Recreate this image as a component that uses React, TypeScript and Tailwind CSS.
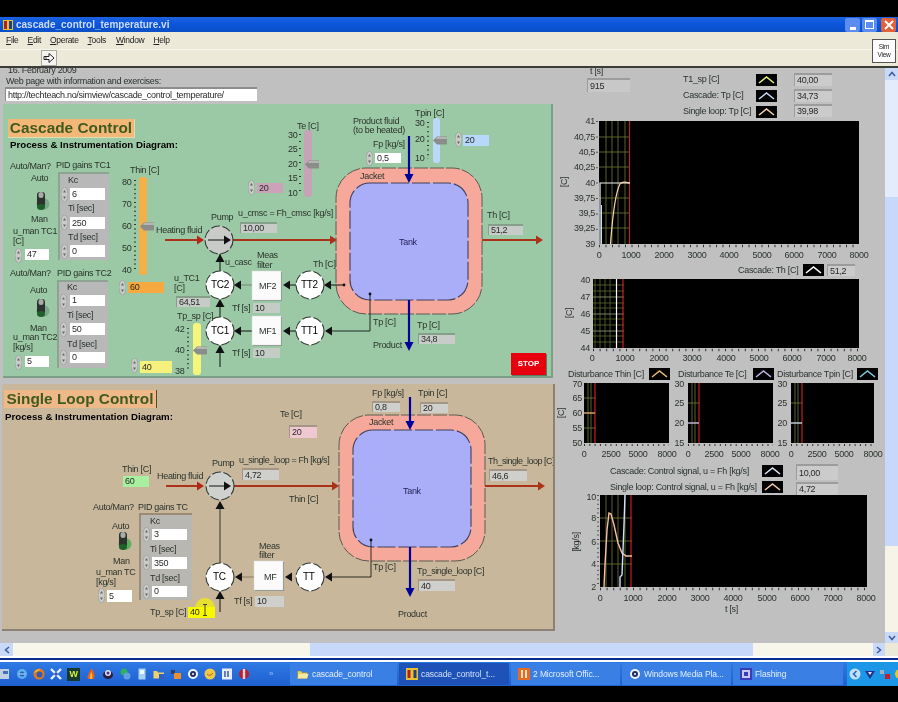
import React from "react";

type P = { c: string; children?: React.ReactNode };

const L = ({ c, children }: P) => (
  <span className={`absolute -translate-y-1/2 whitespace-nowrap leading-none text-[#2a332c] ${c}`}>{children}</span>
);
const F = ({ c, children }: P) => (
  <div className={`absolute flex items-center overflow-hidden whitespace-nowrap pl-[2px] leading-none text-[#2a2a2a] ${c}`}>{children}</div>
);
const Spin = ({ c }: { c: string }) => (
  <svg className={`absolute w-[7px] h-[15px] ${c}`} viewBox="0 0 7 15">
    <ellipse cx="3.5" cy="7.5" rx="3.4" ry="7.4" fill="#c9cbc9" stroke="#8e958f" strokeWidth="0.6" />
    <path d="M3.5 3 L5 5.5 H2 Z M3.5 12 L5 9.5 H2 Z" fill="#666" />
  </svg>
);
const Thumb = ({ c }: { c: string }) => (
  <svg className={`absolute w-[14px] h-[9px] ${c}`} viewBox="0 0 14 9">
    <path d="M0 4.5 L4 0.5 H14 V8.5 H4 Z" fill="#8b8d8b" />
    <path d="M4 1 H14 V3 H3 Z" fill="#b4b6b4" />
  </svg>
);
const Toggle = ({ c, glow }: { c: string; glow: string }) => (
  <svg className={`absolute w-[16px] h-[22px] ${c}`} viewBox="0 0 16 22">
    <ellipse cx="9" cy="14" rx="6.5" ry="6" fill={glow} />
    <rect x="3" y="2" width="8" height="15" rx="3" fill="#2d322e" />
    <rect x="4.5" y="2" width="5" height="6" rx="2.5" fill="#a9aca9" />
    <ellipse cx="7" cy="17" rx="4" ry="3" fill="#1f5f2a" />
  </svg>
);

function Node({ x, y, fill = "#fff" }: { x: number; y: number; fill?: string }) {
  return <circle cx={x} cy={y} r="14" fill={fill} stroke="#2f3a32" strokeWidth="1.1" strokeDasharray="9 2.5" />;
}
function Box({ x, y }: { x: number; y: number }) {
  return (
    <g>
      <rect x={x + 1} y={y + 1} width="29" height="29" fill="#7e8a80" />
      <rect x={x} y={y} width="29" height="29" fill="#fbfbfb" stroke="#d8d8d8" strokeWidth="0.5" />
    </g>
  );
}
const Left = ({ x, y, f = "#111" }: { x: number; y: number; f?: string }) => (
  <path d={`M${x} ${y} l7 -4.5 v9 Z`} fill={f} />
);
const Right = ({ x, y, f = "#111" }: { x: number; y: number; f?: string }) => (
  <path d={`M${x} ${y} l-7 -4.5 v9 Z`} fill={f} />
);
const Up = ({ x, y, f = "#111" }: { x: number; y: number; f?: string }) => (
  <path d={`M${x} ${y} l-4.5 8 h9 Z`} fill={f} />
);
const Down = ({ x, y, f = "#00009a" }: { x: number; y: number; f?: string }) => (
  <path d={`M${x} ${y} l-4.5 -9 h9 Z`} fill={f} />
);
function Tank({ x, y, ox, oy }: { x: number; y: number; ox: number; oy: number }) {
  return (
    <g>
      <rect x={ox} y={oy} width="146" height="146" rx="30" fill="#f6a99b" stroke="#5a5a50" strokeWidth="1" strokeDasharray="14 2" />
      <rect x={x} y={y} width="118" height="117" rx="20" fill="#aaaef8" stroke="#3f3f5c" strokeWidth="1.1" strokeDasharray="18 3" />
    </g>
  );
}
const Pipe = "#a93219";

function Swatch({ x, y, col }: { x: number; y: number; col: string }) {
  return (
    <g>
      <rect x={x} y={y} width="21" height="12" fill="#000" />
      <path d={`M${x + 3} ${y + 9} L${x + 10.5} ${y + 3} L${x + 18} ${y + 9}`} fill="none" stroke={col} strokeWidth="1.6" />
    </g>
  );
}
function Grid({ xs, ys, x1, x2, y1, y2, col = "#6e7a34" }: { xs: number[]; ys: number[]; x1: number; x2: number; y1: number; y2: number; col?: string }) {
  return (
    <g stroke={col} strokeWidth="0.8">
      {xs.map((v) => <line key={"v" + v} x1={v} x2={v} y1={y1} y2={y2} />)}
      {ys.map((v) => <line key={"h" + v} x1={x1} x2={x2} y1={v} y2={v} />)}
    </g>
  );
}

const RightPlots = () => (
  <svg className="absolute left-[556px] top-[68px] w-[329px] h-[575px]" viewBox="556 68 329 575">
    <Swatch x={756} y={74} col="#e8f078" />
    <Swatch x={756} y={90} col="#c8d8f8" />
    <Swatch x={756} y={106} col="#f8d0a8" />
    {/* chart 1 */}
    <rect x="599" y="121" width="260" height="123" fill="#000" />
    <Grid xs={[606, 612, 618, 625]} ys={[137, 152, 167, 198, 213, 228]} x1={599} x2={630} y1={121} y2={244} />
    <line x1="629.5" x2="629.5" y1="121" y2="244" stroke="#c81e1e" strokeWidth="1.2" />
    <path d="M600 244 V183 H630" fill="none" stroke="#f4f4f4" strokeWidth="1.2" />
    <path d="M601.5 244 V205" fill="none" stroke="#c8d8f8" strokeWidth="1" />
    <path d="M610.5 244 C612 225 614 195 620 184 C623 180 626 183 630 183" fill="none" stroke="#f8d8a8" strokeWidth="1.2" />
    <line x1="597" x2="597" y1="121" y2="244" stroke="#555" strokeWidth="2" strokeDasharray="1 14.4" />
    <line x1="599" x2="859" y1="246" y2="246" stroke="#333" strokeWidth="2.4" strokeDasharray="1 5.5" />
    {/* chart 2 */}
    <Swatch x={803} y={264} col="#ffffff" />
    <rect x="593" y="279" width="266" height="69" fill="#000" />
    <Grid xs={[595, 600, 605, 610]} ys={[285, 291, 303, 308, 319, 325, 336, 342]} x1={593} x2={624} y1={279} y2={348} col="#5c6a2c" />
    <Grid xs={[]} ys={[297, 314, 331]} x1={593} x2={624} y1={279} y2={348} col="#9aa07a" />
    <line x1="623" x2="623" y1="279" y2="348" stroke="#c81e1e" strokeWidth="1.2" />
    <path d="M616.5 279 V348" fill="none" stroke="#f8f8f8" strokeWidth="1.2" />
    <line x1="593" x2="859" y1="350" y2="350" stroke="#333" strokeWidth="2.4" strokeDasharray="1 5.6" />
    {/* disturbance */}
    <Swatch x={649} y={368} col="#e8b878" />
    <Swatch x={753} y={368} col="#c0b0e8" />
    <Swatch x={857} y={368} col="#80c8e0" />
    <rect x="584" y="383" width="85" height="60" fill="#000" />
    <Grid xs={[588, 591]} ys={[398, 428]} x1={584} x2={596} y1={383} y2={443} col="#6c7a3a" />
    <line x1="595" x2="595" y1="383" y2="443" stroke="#c81e1e" strokeWidth="1.2" />
    <line x1="584" x2="595" y1="413" y2="413" stroke="#e8a868" strokeWidth="1.4" />
    <rect x="688" y="383" width="85" height="60" fill="#000" />
    <Grid xs={[692, 695]} ys={[403]} x1={688} x2={700} y1={383} y2={443} col="#6c7a3a" />
    <line x1="699" x2="699" y1="383" y2="443" stroke="#c81e1e" strokeWidth="1.2" />
    <line x1="688" x2="699" y1="423" y2="423" stroke="#c8c0e0" strokeWidth="1.4" />
    <rect x="791" y="383" width="83" height="60" fill="#000" />
    <Grid xs={[795, 798]} ys={[403]} x1={791} x2={803} y1={383} y2={443} col="#6c7a3a" />
    <line x1="802" x2="802" y1="383" y2="443" stroke="#c81e1e" strokeWidth="1.2" />
    <line x1="791" x2="802" y1="423" y2="423" stroke="#c8d8e0" strokeWidth="1.4" />
    <line x1="584" x2="669" y1="445" y2="445" stroke="#333" strokeWidth="2.2" strokeDasharray="1 4.3" />
    <line x1="688" x2="773" y1="445" y2="445" stroke="#333" strokeWidth="2.2" strokeDasharray="1 4.3" />
    <line x1="791" x2="874" y1="445" y2="445" stroke="#333" strokeWidth="2.2" strokeDasharray="1 4.3" />
    {/* control signal */}
    <Swatch x={762} y={465} col="#d8e4f8" />
    <Swatch x={762} y={481} col="#f8c8a8" />
    <rect x="600" y="495" width="267" height="92" fill="#000" />
    <Grid xs={[606, 612, 618, 625]} ys={[518, 541, 564]} x1={600} x2={632} y1={495} y2={587} />
    <line x1="631" x2="631" y1="495" y2="587" stroke="#c81e1e" strokeWidth="1.2" />
    <path d="M604 587 L605 565 L607 530 L609 513 L611 514 L614 525 L618 543 L622 553 L626 556 H632" fill="none" stroke="#f8c0a0" strokeWidth="1.4" />
    <path d="M620 587 V577 L622 575 L623 550 L624 525 L625 495" fill="none" stroke="#d0e0fa" strokeWidth="1.4" />
    <line x1="598" x2="598" y1="495" y2="587" stroke="#555" strokeWidth="2" strokeDasharray="1 3.4" />
    <line x1="600" x2="867" y1="589" y2="589" stroke="#333" strokeWidth="2.4" strokeDasharray="1 5.6" />
  </svg>
);

const Green = () => (
  <>
    <svg className="absolute left-[3px] top-[104px] w-[550px] h-[274px]" viewBox="3 104 550 274">
      <Tank ox={336} oy={168} x={350} y={183} />
      {/* red pipes */}
      <line x1="165" x2="200" y1="240" y2="240" stroke={Pipe} strokeWidth="2" />
      <Right x={204} y={240} f="#b0261a" />
      <line x1="233" x2="332" y1="240" y2="240" stroke={Pipe} strokeWidth="2" />
      <Right x={337} y={240} f={Pipe} />
      <line x1="482" x2="536" y1="240" y2="240" stroke={Pipe} strokeWidth="2" />
      <Right x={543} y={240} f={Pipe} />
      {/* blue */}
      <line x1="409" x2="409" y1="136" y2="176" stroke="#00009a" strokeWidth="2.2" />
      <Down x={409} y={183} />
      <line x1="409" x2="409" y1="300" y2="343" stroke="#00009a" strokeWidth="2.2" />
      <Down x={409} y={351} />
      {/* signals */}
      <line x1="220" x2="220" y1="254" y2="272" stroke="#111" strokeWidth="1" />
      <Up x={220} y={254} />
      <line x1="220" x2="220" y1="303" y2="317" stroke="#111" strokeWidth="1" />
      <Up x={220} y={299} />
      <line x1="220" x2="220" y1="348" y2="367" stroke="#111" strokeWidth="1" />
      <Up x={220} y={345} />
      <line x1="240" x2="252" y1="285" y2="285" stroke="#6f8a76" strokeWidth="1" />
      <Left x={234} y={285} />
      <line x1="240" x2="252" y1="331" y2="331" stroke="#111" strokeWidth="1" />
      <Left x={234} y={331} />
      <line x1="288" x2="296" y1="285" y2="285" stroke="#111" strokeWidth="1" />
      <Left x={283} y={285} />
      <line x1="288" x2="296" y1="331" y2="331" stroke="#111" strokeWidth="1" />
      <Left x={283} y={331} />
      <path d="M330 285 H344" stroke="#111" strokeWidth="1" fill="none" />
      <Left x={324} y={285} />
      <circle cx="344" cy="285" r="1.4" fill="#111" />
      <path d="M370 294 V331 H331" stroke="#1d2a20" strokeWidth="1" fill="none" />
      <Left x={325} y={331} />
      <circle cx="370" cy="294" r="1.4" fill="#111" />
      <Node x={219} y={240} fill="#c9cbc9" />
      <path d="M208 240 H228" stroke="#111" strokeWidth="1" />
      <Right x={231} y={240} />
      <Node x={220} y={285} />
      <Node x={220} y={331} />
      <Node x={310} y={285} />
      <Node x={310} y={331} />
      <Box x={252} y={271} />
      <Box x={252} y={316} />
      {/* slider ticks */}
      <line x1="135" x2="135" y1="180" y2="272" stroke="#2a3a2e" strokeWidth="2" strokeDasharray="1 3.4" />
      <line x1="188" x2="188" y1="328" y2="372" stroke="#2a3a2e" strokeWidth="2" strokeDasharray="1 3.4" />
      <line x1="300" x2="300" y1="134" y2="194" stroke="#2a3a2e" strokeWidth="2" strokeDasharray="1 6" />
      <line x1="428" x2="428" y1="122" y2="159" stroke="#2a3a2e" strokeWidth="2" strokeDasharray="1 3.6" />
    </svg>

    <div className="absolute left-[8px] top-[119px] w-[127px] h-[19px] bg-[#f3b877] border-r border-b border-[#d9e0b0] flex items-center justify-center whitespace-nowrap text-[15.4px] font-bold tracking-normal text-[#3f5a1f] leading-none">Cascade Control</div>
    <L c="left-[10px] top-[145px] font-bold text-[9.7px] tracking-normal text-black">Process &amp; Instrumentation Diagram:</L>

    {/* TC1 controls */}
    <L c="left-[10px] top-[166px]">Auto/Man?</L>
    <L c="left-[56px] top-[165px]">PID gains TC1</L>
    <L c="left-[31px] top-[178px]">Auto</L>
    <Toggle c="left-[34px] top-[190px]" glow="#7aa88a" />
    <L c="left-[31px] top-[219px]">Man</L>
    <L c="left-[13px] top-[231px]">u_man TC1</L>
    <L c="left-[13px] top-[241px]">[C]</L>
    <Spin c="left-[15px] top-[248px]" />
    <F c="left-[25px] top-[249px] w-[24px] h-[11px] bg-white">47</F>

    <div className="absolute left-[58px] top-[172px] w-[51px] h-[88px] bg-[#b8b8b8] border-t-2 border-l-2 border-[#8ea392]" />
    <L c="left-[68px] top-[180px]">Kc</L>
    <Spin c="left-[61px] top-[187px]" />
    <F c="left-[70px] top-[188px] w-[35px] h-[12px] bg-white">6</F>
    <L c="left-[68px] top-[208px]">Ti [sec]</L>
    <Spin c="left-[61px] top-[215px]" />
    <F c="left-[70px] top-[217px] w-[35px] h-[12px] bg-white">250</F>
    <L c="left-[68px] top-[237px]">Td [sec]</L>
    <Spin c="left-[61px] top-[244px]" />
    <F c="left-[70px] top-[245px] w-[35px] h-[12px] bg-white">0</F>

    {/* TC2 controls */}
    <L c="left-[10px] top-[273px]">Auto/Man?</L>
    <L c="left-[57px] top-[273px]">PID gains TC2</L>
    <L c="left-[30px] top-[290px]">Auto</L>
    <Toggle c="left-[34px] top-[297px]" glow="#7aa88a" />
    <L c="left-[30px] top-[328px]">Man</L>
    <L c="left-[13px] top-[337px]">u_man TC2</L>
    <L c="left-[13px] top-[347px]">[kg/s]</L>
    <Spin c="left-[15px] top-[355px]" />
    <F c="left-[25px] top-[356px] w-[24px] h-[11px] bg-white">5</F>

    <div className="absolute left-[57px] top-[280px] w-[51px] h-[88px] bg-[#b8b8b8] border-t-2 border-l-2 border-[#8ea392]" />
    <L c="left-[67px] top-[287px]">Kc</L>
    <Spin c="left-[60px] top-[294px]" />
    <F c="left-[70px] top-[295px] w-[35px] h-[11px] bg-white">1</F>
    <L c="left-[67px] top-[315px]">Ti [sec]</L>
    <Spin c="left-[60px] top-[322px]" />
    <F c="left-[70px] top-[323px] w-[35px] h-[12px] bg-white">50</F>
    <L c="left-[67px] top-[344px]">Td [sec]</L>
    <Spin c="left-[60px] top-[350px]" />
    <F c="left-[70px] top-[352px] w-[35px] h-[11px] bg-white">0</F>

    {/* Thin slider */}
    <L c="left-[130px] top-[170px]">Thin [C]</L>
    <L c="left-[122px] top-[182px]">80</L>
    <L c="left-[122px] top-[204px]">70</L>
    <L c="left-[122px] top-[226px]">60</L>
    <L c="left-[122px] top-[248px]">50</L>
    <L c="left-[122px] top-[270px]">40</L>
    <div className="absolute left-[139px] top-[177px] w-[8px] h-[98px] rounded-[3px] bg-[#f4b048]" />
    <Thumb c="left-[140px] top-[222px]" />
    <Spin c="left-[119px] top-[280px]" />
    <F c="left-[128px] top-[282px] w-[36px] h-[11px] bg-[#f6a93f]">60</F>
    <L c="left-[156px] top-[230px]">Heating fluid</L>

    <L c="left-[211px] top-[217px]">Pump</L>
    <L c="left-[238px] top-[213px]">u_cmsc = Fh_cmsc [kg/s]</L>
    <F c="left-[240px] top-[222px] w-[37px] h-[11px] bg-[#c8ccc8] border-t-2 border-l border-[#84a08a]">10,00</F>
    <L c="left-[225px] top-[262px]">u_casc</L>
    <L c="left-[257px] top-[255px]">Meas</L>
    <L c="left-[257px] top-[265px]">filter</L>
    <L c="left-[211px] top-[285px] text-[10px] text-black">TC2</L>
    <L c="left-[211px] top-[331px] text-[10px] text-black">TC1</L>
    <L c="left-[301px] top-[285px] text-[10px] text-black">TT2</L>
    <L c="left-[301px] top-[331px] text-[10px] text-black">TT1</L>
    <L c="left-[259px] top-[286px]">MF2</L>
    <L c="left-[259px] top-[331px]">MF1</L>
    <L c="left-[174px] top-[278px]">u_TC1</L>
    <L c="left-[174px] top-[288px]">[C]</L>
    <F c="left-[176px] top-[296px] w-[34px] h-[11px] bg-[#c8ccc8] border-t-2 border-l border-[#84a08a]">64,51</F>
    <L c="left-[232px] top-[308px]">Tf [s]</L>
    <F c="left-[253px] top-[303px] w-[27px] h-[10px] bg-[#c4ccc6]">10</F>
    <L c="left-[232px] top-[353px]">Tf [s]</L>
    <F c="left-[253px] top-[348px] w-[27px] h-[10px] bg-[#c4ccc6]">10</F>
    <L c="left-[177px] top-[316px]">Tp_sp [C]</L>
    <L c="left-[175px] top-[329px]">42</L>
    <L c="left-[175px] top-[350px]">40</L>
    <L c="left-[175px] top-[371px]">38</L>
    <div className="absolute left-[193px] top-[323px] w-[8px] h-[52px] rounded-[3px] bg-[#f5f57c]" />
    <Thumb c="left-[193px] top-[346px]" />
    <Spin c="left-[131px] top-[358px]" />
    <F c="left-[140px] top-[361px] w-[32px] h-[12px] bg-[#f6f07c]">40</F>

    {/* Te slider */}
    <L c="left-[297px] top-[126px]">Te [C]</L>
    <L c="left-[288px] top-[135px]">30</L>
    <L c="left-[288px] top-[149px]">25</L>
    <L c="left-[288px] top-[164px]">20</L>
    <L c="left-[288px] top-[178px]">15</L>
    <L c="left-[288px] top-[193px]">10</L>
    <div className="absolute left-[304px] top-[130px] w-[8px] h-[67px] rounded-[3px] bg-[#c8a2b6]" />
    <Thumb c="left-[305px] top-[160px]" />
    <Spin c="left-[248px] top-[180px]" />
    <F c="left-[257px] top-[183px] w-[26px] h-[10px] bg-[#cba2b8]">20</F>

    {/* Tpin */}
    <L c="left-[415px] top-[113px]">Tpin [C]</L>
    <L c="left-[415px] top-[123px]">30</L>
    <L c="left-[415px] top-[139px]">20</L>
    <L c="left-[415px] top-[158px]">10</L>
    <div className="absolute left-[433px] top-[118px] w-[7px] h-[45px] rounded-[3px] bg-[#bcd8f8]" />
    <Thumb c="left-[433px] top-[136px]" />
    <Spin c="left-[455px] top-[132px]" />
    <F c="left-[463px] top-[135px] w-[26px] h-[11px] bg-[#b8d8fb]">20</F>

    <L c="left-[353px] top-[121px]">Product fluid</L>
    <L c="left-[353px] top-[130px]">(to be heated)</L>
    <L c="left-[373px] top-[144px]">Fp [kg/s]</L>
    <Spin c="left-[366px] top-[151px]" />
    <F c="left-[375px] top-[153px] w-[26px] h-[10px] bg-white">0,5</F>

    <L c="left-[360px] top-[176px] text-[#2a2a2a]">Jacket</L>
    <L c="left-[399px] top-[242px] text-[#23235a]">Tank</L>
    <L c="left-[487px] top-[215px]">Th [C]</L>
    <F c="left-[488px] top-[224px] w-[35px] h-[11px] bg-[#c8ccc8] border-t-2 border-l border-[#84a08a]">51,2</F>
    <L c="left-[313px] top-[264px]">Th [C]</L>
    <L c="left-[373px] top-[322px]">Tp [C]</L>
    <L c="left-[417px] top-[325px]">Tp [C]</L>
    <F c="left-[418px] top-[333px] w-[37px] h-[11px] bg-[#c8ccc8] border-t-2 border-l border-[#84a08a]">34,8</F>
    <L c="left-[373px] top-[345px]">Product</L>

    <div className="absolute left-[511px] top-[353px] w-[35px] h-[22px] bg-[#e8000f] flex items-center justify-center text-white font-bold text-[8px] tracking-normal leading-none shadow-[1px_1px_0_#5a7a62]">STOP</div>
  </>
);

const Tan = () => (
  <>
    <svg className="absolute left-[2px] top-[384px] w-[553px] h-[247px]" viewBox="2 384 553 247">
      <Tank ox={339} oy={415} x={353} y={430} />
      <circle cx="205" cy="608" r="10" fill="#e8e030" />
      <line x1="166" x2="198" y1="486" y2="486" stroke={Pipe} strokeWidth="2" />
      <Right x={204} y={486} f="#b0261a" />
      <line x1="234" x2="334" y1="486" y2="486" stroke={Pipe} strokeWidth="2" />
      <Right x={339} y={486} f={Pipe} />
      <line x1="485" x2="538" y1="486" y2="486" stroke={Pipe} strokeWidth="2" />
      <Right x={545} y={486} f={Pipe} />
      <line x1="410" x2="410" y1="397" y2="423" stroke="#00009a" strokeWidth="2.2" />
      <Down x={410} y={430} />
      <line x1="410" x2="410" y1="547" y2="590" stroke="#00009a" strokeWidth="2.2" />
      <Down x={410} y={597} />
      <line x1="220" x2="220" y1="505" y2="563" stroke="#333" strokeWidth="1" />
      <Up x={220} y={501} />
      <line x1="220" x2="220" y1="596" y2="612" stroke="#111" strokeWidth="1" />
      <Up x={220} y={591} />
      <line x1="241" x2="254" y1="577" y2="577" stroke="#8a7c66" strokeWidth="1" />
      <Left x={235} y={577} />
      <Left x={285} y={577} />
      <path d="M371 540 V577 H330" stroke="#2a2a20" strokeWidth="1" fill="none" />
      <Left x={325} y={577} />
      <circle cx="371" cy="540" r="1.4" fill="#111" />
      <Node x={220} y={486} fill="#cfd1cf" />
      <path d="M209 486 H229" stroke="#111" strokeWidth="1" />
      <Right x={231} y={486} />
      <Node x={220} y={577} />
      <Node x={310} y={577} />
      <Box x={254} y={561} />
    </svg>

    <div className="absolute left-[4px] top-[390px] w-[153px] h-[18px] bg-[#efb888] border-r border-[#554a30] flex items-center justify-center whitespace-nowrap text-[15.4px] font-bold tracking-normal text-[#3f5a1f] leading-none">Single Loop Control</div>
    <L c="left-[5px] top-[417px] font-bold text-[9.7px] tracking-normal text-black">Process &amp; Instrumentation Diagram:</L>

    <L c="left-[280px] top-[414px]">Te [C]</L>
    <F c="left-[289px] top-[425px] w-[28px] h-[13px] bg-[#f0c8d0] border-t-2 border-l border-[#a39686]">20</F>
    <L c="left-[372px] top-[393px]">Fp [kg/s]</L>
    <F c="left-[372px] top-[401px] w-[28px] h-[11px] bg-[#cfcfcb] border-t-2 border-l border-[#a39686]">0,8</F>
    <L c="left-[418px] top-[393px]">Tpin [C]</L>
    <F c="left-[420px] top-[402px] w-[28px] h-[11px] bg-[#cfcfcb] border-t-2 border-l border-[#a39686]">20</F>
    <L c="left-[369px] top-[422px]">Jacket</L>
    <L c="left-[403px] top-[491px] text-[#23235a]">Tank</L>

    <L c="left-[122px] top-[469px]">Thin [C]</L>
    <F c="left-[123px] top-[476px] w-[26px] h-[11px] bg-[#a8f0a0]">60</F>
    <L c="left-[157px] top-[476px]">Heating fluid</L>
    <L c="left-[212px] top-[463px]">Pump</L>
    <L c="left-[239px] top-[460px] tracking-[-0.4px]">u_single_loop = Fh [kg/s]</L>
    <F c="left-[242px] top-[468px] w-[37px] h-[12px] bg-[#cfcfcb] border-t-2 border-l border-[#a39686]">4,72</F>
    <L c="left-[289px] top-[499px]">Thin [C]</L>
    <L c="left-[488px] top-[461px] tracking-[-0.5px]">Th_single_loop [C]</L>
    <F c="left-[489px] top-[469px] w-[38px] h-[12px] bg-[#cfcfcb] border-t-2 border-l border-[#a39686]">46,6</F>

    <L c="left-[93px] top-[507px]">Auto/Man?</L>
    <L c="left-[138px] top-[507px]">PID gains TC</L>
    <L c="left-[112px] top-[526px]">Auto</L>
    <Toggle c="left-[116px] top-[530px]" glow="#5fae5f" />
    <L c="left-[113px] top-[561px]">Man</L>
    <L c="left-[96px] top-[572px]">u_man TC</L>
    <L c="left-[96px] top-[582px]">[kg/s]</L>
    <Spin c="left-[98px] top-[588px]" />
    <F c="left-[107px] top-[590px] w-[25px] h-[12px] bg-white">5</F>

    <div className="absolute left-[139px] top-[513px] w-[53px] h-[87px] bg-[#b9b7b2] border-t-2 border-l-2 border-[#9a8c78]" />
    <L c="left-[150px] top-[521px]">Kc</L>
    <Spin c="left-[143px] top-[527px]" />
    <F c="left-[152px] top-[529px] w-[35px] h-[11px] bg-white">3</F>
    <L c="left-[150px] top-[549px]">Ti [sec]</L>
    <Spin c="left-[143px] top-[555px]" />
    <F c="left-[152px] top-[557px] w-[35px] h-[12px] bg-white">350</F>
    <L c="left-[150px] top-[578px]">Td [sec]</L>
    <Spin c="left-[143px] top-[584px]" />
    <F c="left-[152px] top-[586px] w-[35px] h-[11px] bg-white">0</F>

    <L c="left-[259px] top-[546px]">Meas</L>
    <L c="left-[259px] top-[555px]">filter</L>
    <L c="left-[264px] top-[577px]">MF</L>
    <L c="left-[213px] top-[577px] text-[10px] text-black">TC</L>
    <L c="left-[303px] top-[577px] text-[10px] text-black">TT</L>
    <L c="left-[234px] top-[601px]">Tf [s]</L>
    <F c="left-[255px] top-[596px] w-[29px] h-[11px] bg-[#cfcfcb]">10</F>
    <L c="left-[373px] top-[567px]">Tp [C]</L>
    <L c="left-[417px] top-[571px] tracking-[-0.45px]">Tp_single_loop [C]</L>
    <F c="left-[418px] top-[579px] w-[37px] h-[12px] bg-[#cfcfcb] border-t-2 border-l border-[#a39686]">40</F>
    <L c="left-[398px] top-[614px]">Product</L>
    <L c="left-[150px] top-[612px]">Tp_sp [C]</L>
    <F c="left-[188px] top-[607px] w-[27px] h-[11px] bg-[#f8f800]">40</F>
    <svg className="absolute left-[202px] top-[604px] w-[6px] h-[12px]" viewBox="0 0 6 12">
      <path d="M1 0.5 H5 M3 0.5 V11.5 M1 11.5 H5" stroke="#333" fill="none" strokeWidth="0.9" />
    </svg>
  </>
);

const Right_ = () => (
  <>
    <RightPlots />
    <L c="left-[590px] top-[71px]">t [s]</L>
    <F c="left-[587px] top-[78px] w-[43px] h-[14px] bg-[#c8c8c8] border-t-2 border-l border-[#9c9c9c]">915</F>
    <L c="left-[683px] top-[79px]">T1_sp [C]</L>
    <L c="left-[683px] top-[95px]">Cascade: Tp [C]</L>
    <L c="left-[683px] top-[111px]">Single loop: Tp [C]</L>
    <F c="left-[794px] top-[73px] w-[38px] h-[13px] bg-[#cbcbcb] border-t-2 border-l border-[#9c9c9c]">40,00</F>
    <F c="left-[794px] top-[89px] w-[38px] h-[13px] bg-[#cbcbcb] border-t-2 border-l border-[#9c9c9c]">34,73</F>
    <F c="left-[794px] top-[104px] w-[38px] h-[13px] bg-[#cbcbcb] border-t-2 border-l border-[#9c9c9c]">39,98</F>

    <L c="right-[290px] top-[121px]">41</L>
    <L c="right-[290px] top-[137px]">40,75</L>
    <L c="right-[290px] top-[152px]">40,5</L>
    <L c="right-[290px] top-[167px]">40,25</L>
    <L c="right-[290px] top-[183px]">40</L>
    <L c="right-[290px] top-[198px]">39,75</L>
    <L c="right-[290px] top-[213px]">39,5</L>
    <L c="right-[290px] top-[228px]">39,25</L>
    <L c="right-[290px] top-[244px]">39</L>
    <L c="left-[564px] top-[182px] -translate-x-1/2 -rotate-90">[C]</L>
    <L c="left-[599px] top-[255px] -translate-x-1/2">0</L>
    <L c="left-[631px] top-[255px] -translate-x-1/2">1000</L>
    <L c="left-[664px] top-[255px] -translate-x-1/2">2000</L>
    <L c="left-[697px] top-[255px] -translate-x-1/2">3000</L>
    <L c="left-[729px] top-[255px] -translate-x-1/2">4000</L>
    <L c="left-[762px] top-[255px] -translate-x-1/2">5000</L>
    <L c="left-[794px] top-[255px] -translate-x-1/2">6000</L>
    <L c="left-[827px] top-[255px] -translate-x-1/2">7000</L>
    <L c="left-[859px] top-[255px] -translate-x-1/2">8000</L>

    <L c="left-[738px] top-[270px]">Cascade: Th [C]</L>
    <F c="left-[827px] top-[264px] w-[28px] h-[12px] bg-[#cbcbcb] border-t-2 border-l border-[#9c9c9c]">51,2</F>
    <L c="right-[295px] top-[280px]">40</L>
    <L c="right-[295px] top-[297px]">47</L>
    <L c="right-[295px] top-[314px]">46</L>
    <L c="right-[295px] top-[331px]">45</L>
    <L c="right-[295px] top-[348px]">44</L>
    <L c="left-[569px] top-[313px] -translate-x-1/2 -rotate-90">[C]</L>
    <L c="left-[592px] top-[358px] -translate-x-1/2">0</L>
    <L c="left-[625px] top-[358px] -translate-x-1/2">1000</L>
    <L c="left-[659px] top-[358px] -translate-x-1/2">2000</L>
    <L c="left-[692px] top-[358px] -translate-x-1/2">3000</L>
    <L c="left-[726px] top-[358px] -translate-x-1/2">4000</L>
    <L c="left-[759px] top-[358px] -translate-x-1/2">5000</L>
    <L c="left-[792px] top-[358px] -translate-x-1/2">6000</L>
    <L c="left-[826px] top-[358px] -translate-x-1/2">7000</L>
    <L c="left-[857px] top-[358px] -translate-x-1/2">8000</L>

    <L c="left-[568px] top-[374px]">Disturbance Thin [C]</L>
    <L c="left-[678px] top-[374px]">Disturbance Te [C]</L>
    <L c="left-[777px] top-[374px]">Disturbance Tpin [C]</L>
    <L c="right-[303px] top-[384px]">70</L>
    <L c="right-[303px] top-[398px]">65</L>
    <L c="right-[303px] top-[413px]">60</L>
    <L c="right-[303px] top-[428px]">55</L>
    <L c="right-[303px] top-[443px]">50</L>
    <L c="left-[561px] top-[413px] -translate-x-1/2 -rotate-90">[C]</L>
    <L c="left-[684px] top-[384px] -translate-x-full">30</L>
    <L c="left-[684px] top-[403px] -translate-x-full">25</L>
    <L c="left-[684px] top-[423px] -translate-x-full">20</L>
    <L c="left-[684px] top-[443px] -translate-x-full">15</L>
    <L c="left-[787px] top-[384px] -translate-x-full">30</L>
    <L c="left-[787px] top-[403px] -translate-x-full">25</L>
    <L c="left-[787px] top-[423px] -translate-x-full">20</L>
    <L c="left-[787px] top-[443px] -translate-x-full">15</L>
    <L c="left-[584px] top-[454px] -translate-x-1/2">0</L>
    <L c="left-[611px] top-[454px] -translate-x-1/2">2500</L>
    <L c="left-[638px] top-[454px] -translate-x-1/2">5000</L>
    <L c="left-[667px] top-[454px] -translate-x-1/2">8000</L>
    <L c="left-[688px] top-[454px] -translate-x-1/2">0</L>
    <L c="left-[714px] top-[454px] -translate-x-1/2">2500</L>
    <L c="left-[741px] top-[454px] -translate-x-1/2">5000</L>
    <L c="left-[770px] top-[454px] -translate-x-1/2">8000</L>
    <L c="left-[791px] top-[454px] -translate-x-1/2">0</L>
    <L c="left-[817px] top-[454px] -translate-x-1/2">2500</L>
    <L c="left-[844px] top-[454px] -translate-x-1/2">5000</L>
    <L c="left-[873px] top-[454px] -translate-x-1/2">8000</L>

    <L c="left-[610px] top-[471px]">Cascade: Control signal, u = Fh [kg/s]</L>
    <L c="left-[610px] top-[487px]">Single loop: Control signal, u = Fh [kg/s]</L>
    <F c="left-[796px] top-[464px] w-[42px] h-[16px] bg-[#cbcbcb] border-t-2 border-l border-[#9c9c9c]">10,00</F>
    <F c="left-[796px] top-[482px] w-[42px] h-[13px] bg-[#cbcbcb] border-t-2 border-l border-[#9c9c9c]">4,72</F>
    <L c="right-[289px] top-[497px]">10</L>
    <L c="right-[289px] top-[518px]">8</L>
    <L c="right-[289px] top-[542px]">6</L>
    <L c="right-[289px] top-[564px]">4</L>
    <L c="right-[289px] top-[587px]">2</L>
    <L c="left-[576px] top-[542px] -translate-x-1/2 -rotate-90">[kg/s]</L>
    <L c="left-[600px] top-[598px] -translate-x-1/2">0</L>
    <L c="left-[633px] top-[598px] -translate-x-1/2">1000</L>
    <L c="left-[667px] top-[598px] -translate-x-1/2">2000</L>
    <L c="left-[700px] top-[598px] -translate-x-1/2">3000</L>
    <L c="left-[733px] top-[598px] -translate-x-1/2">4000</L>
    <L c="left-[767px] top-[598px] -translate-x-1/2">5000</L>
    <L c="left-[800px] top-[598px] -translate-x-1/2">6000</L>
    <L c="left-[833px] top-[598px] -translate-x-1/2">7000</L>
    <L c="left-[866px] top-[598px] -translate-x-1/2">8000</L>
    <L c="left-[725px] top-[609px]">t [s]</L>
  </>
);

const Ico = ({ children, c = "w-[12px] h-[12px]" }: { children: React.ReactNode; c?: string }) => (
  <svg className={`shrink-0 ${c}`} viewBox="0 0 12 12">{children}</svg>
);

const Folder = () => (
  <Ico>
    <path d="M0.5 3 H4 L5 4.5 H10.5 V10.5 H0.5 Z" fill="#e8d070" stroke="#7a6a30" strokeWidth="0.4" />
    <path d="M2 6 H11.5 L10 10.5 H0.5 Z" fill="#f8e8a0" />
  </Ico>
);

const QuickIcons = () => (
  <div className="flex w-[270px] items-center gap-[5px]">
    <Ico c="ml-[-6px] h-[12px] w-[12px]"><rect x="0" y="1" width="12" height="10" fill="#c0d0e0" /><rect x="6" y="3" width="5" height="3" fill="#4070c0" /></Ico>
    <Ico c="ml-[2px] h-[12px] w-[12px]"><circle cx="6" cy="6" r="5" fill="#60b0f0" /><circle cx="6" cy="6" r="2.5" fill="#2060c0" /><rect x="3" y="5.5" width="6" height="1" fill="#d0e8fa" /></Ico>
    <Ico><circle cx="6" cy="6" r="5.5" fill="#e07a1a" /><circle cx="6.5" cy="6.5" r="3" fill="#3a58b0" /><path d="M1 5 Q3 1 8 1 L3 4 Z" fill="#f8c040" /></Ico>
    <Ico><path d="M1 1 L11 11 M11 1 L1 11" stroke="#e8f0ff" strokeWidth="2.4" /><circle cx="6" cy="6" r="1.8" fill="#3050c0" /></Ico>
    <span className="flex h-[13px] w-[13px] shrink-0 items-center justify-center bg-[#163a30] text-[9px] font-bold leading-none text-[#d8f040]">W</span>
    <Ico><path d="M6 0.5 C9 3 10 6 9 11 H3 C1.5 8 4 6 6 0.5 Z" fill="#e86020" /><path d="M6 4 C7.5 6 7.5 8 7 11 H5 C4.5 9 5.5 7 6 4 Z" fill="#f8c040" /></Ico>
    <Ico><ellipse cx="6" cy="7" rx="5" ry="4" fill="#2a2040" /><circle cx="6" cy="5" r="3" fill="#e0e0f0" /><circle cx="6" cy="5" r="1.5" fill="#503080" /></Ico>
    <Ico><circle cx="5" cy="4" r="3.5" fill="#30b060" /><circle cx="8" cy="8" r="3.5" fill="#60a0e0" /></Ico>
    <Ico><rect x="2.5" y="0.5" width="7" height="11" fill="#a8d0f4" /><rect x="4" y="2" width="4" height="4" fill="#f0f8ff" /></Ico>
    <Ico><path d="M0.5 3 H4 L5 4.5 H11 V10.5 H0.5 Z" fill="#f0d070" /><rect x="6" y="6" width="5" height="5" fill="#3060c0" /></Ico>
    <Ico><rect x="1" y="2" width="4" height="4" fill="#304060" /><rect x="4" y="5" width="7" height="6" fill="#e89030" /></Ico>
    <Ico><circle cx="6" cy="6" r="5" fill="#f0f4ff" /><circle cx="6" cy="6" r="3" fill="#203060" /><circle cx="6" cy="6" r="1" fill="#fff" /></Ico>
    <Ico><circle cx="6" cy="6" r="5.5" fill="#f0c848" /><path d="M3 6 Q6 9 9 5" stroke="#c06020" fill="none" /></Ico>
    <Ico><rect x="1" y="0.5" width="10" height="11" fill="#e8eef8" /><path d="M4 3 V9 M7 3 V9" stroke="#3050a0" strokeWidth="1.4" /></Ico>
    <Ico><circle cx="6" cy="6" r="5" fill="#b82030" /><rect x="4.8" y="1" width="2.4" height="10" fill="#f0d0d0" /></Ico>
    <span className="ml-[14px] text-[8px] leading-none text-[#9cc0f0]">»</span>
  </div>
);

function Task({ c, icon, label, active }: { c: string; icon: React.ReactNode; label: string; active?: boolean }) {
  return (
    <div className={`flex h-[22px] shrink-0 items-center gap-[3px] overflow-hidden pl-[7px] text-[8.5px] leading-none tracking-[-0.1px] ${active ? "bg-[#1e52b7] text-[#cfe0fa]" : "bg-[#3a80e4] text-[#e2edfb]"} ${c}`}>
      {icon}
      <span className="whitespace-nowrap">{label}</span>
    </div>
  );
}

export default function App() {
  return (
    <div className="relative flex h-[702px] w-[898px] flex-col overflow-hidden bg-black font-['Liberation_Sans',Arial,sans-serif] text-[9px] tracking-[-0.3px] blur-[0.5px]">
      <div className="h-[17px] shrink-0 bg-black" />

      {/* title bar */}
      <div className="flex h-[15px] shrink-0 items-center bg-gradient-to-b from-[#1c62e0] via-[#0a55dc] to-[#0a4fc4] pl-[3px] pr-[2px]">
        <svg className="h-[10px] w-[10px] shrink-0" viewBox="0 0 10 10">
          <rect width="10" height="10" fill="#e8c030" />
          <rect x="1" y="1" width="3" height="8" fill="#b02020" />
          <rect x="6" y="1" width="3" height="8" fill="#204080" />
        </svg>
        <span className="ml-[3px] whitespace-nowrap text-[10px] font-bold tracking-normal leading-none text-[#cfdcf6]">cascade_control_temperature.vi</span>
        <div className="ml-auto flex items-center gap-[2px]">
          <div className="flex h-[14px] w-[15px] items-end justify-center rounded-[2px] bg-[#5b8cf0] pb-[2px]"><div className="h-[3px] w-[6px] bg-white" /></div>
          <div className="flex h-[14px] w-[15px] items-center justify-center rounded-[2px] bg-[#5b8cf0]"><div className="h-[9px] w-[9px] border border-t-2 border-white" /></div>
          <div className="ml-[2px] flex h-[14px] w-[15px] items-center justify-center rounded-[2px] bg-[#e2603a]">
            <svg className="h-[10px] w-[10px]" viewBox="0 0 10 10"><path d="M1 1 L9 9 M9 1 L1 9" stroke="#fff" strokeWidth="2" /></svg>
          </div>
        </div>
      </div>

      {/* menu + toolbar */}
      <div className="relative h-[36px] shrink-0 bg-[#ece9d8] border-b-2 border-[#3c3c38]">
        <div className="flex h-[18px] items-center border-b border-[#f8f6ec] text-[8.5px] text-[#222]">
          <span className="ml-[6px]"><u>F</u>ile</span>
          <span className="ml-[9px]"><u>E</u>dit</span>
          <span className="ml-[9px]"><u>O</u>perate</span>
          <span className="ml-[9px]"><u>T</u>ools</span>
          <span className="ml-[10px]"><u>W</u>indow</span>
          <span className="ml-[9px]"><u>H</u>elp</span>
        </div>
        <div className="absolute left-[41px] top-[18px] flex h-[16px] w-[16px] items-center justify-center border border-[#a8a8a0] bg-[#f4f4f0]">
          <svg className="h-[12px] w-[12px]" viewBox="0 0 12 12">
            <path d="M1 4.5 H6 V1.5 L11 6 L6 10.5 V7.5 H1 Z" fill="#fff" stroke="#222" strokeWidth="1" />
            <path d="M3 4.5 V7.5" stroke="#222" strokeWidth="0.8" />
          </svg>
        </div>
        <div className="absolute left-[872px] top-[7px] flex h-[24px] w-[24px] flex-col items-center justify-center border border-[#555] bg-white text-[6.5px] leading-[8px] text-[#222]">
          <span>Sim</span>
          <span>View</span>
        </div>
      </div>

      {/* workspace */}
      <div className="flex h-[588px] shrink-0 flex-col bg-[#c0c0c0]">
        <div className="flex h-[575px] shrink-0 overflow-hidden">
          <div className="w-[556px] shrink-0">
            <div className="relative h-[36px] overflow-hidden">
              <L c="left-[8px] top-[2px]">16. February 2009</L>
              <L c="left-[6px] top-[13px]">Web page with information and exercises:</L>
              <F c="left-[5px] top-[19px] w-[252px] h-[14px] bg-white border-t-2 border-l border-[#8c8c8c]">http://techteach.no/simview/cascade_control_temperature/</F>
            </div>
            <div className="relative ml-[3px] h-[274px] w-[550px] overflow-hidden border-r-2 border-b-2 border-[#7d9f88] bg-[#9cc9a5]">
              <div className="absolute left-[-3px] top-[-104px]"><Green /></div>
            </div>
            <div className="relative ml-[2px] mt-[6px] h-[247px] w-[553px] overflow-hidden border-r-2 border-b-2 border-[#8c8274] bg-[#c9b79c]">
              <div className="absolute left-[-2px] top-[-384px]"><Tan /></div>
            </div>
          </div>
          <div className="relative min-w-0 flex-1 overflow-hidden">
            <div className="absolute left-[-556px] top-[-68px] h-[702px] w-[885px]"><Right_ /></div>
          </div>
          {/* vertical scrollbar */}
          <div className="flex w-[13px] shrink-0 flex-col bg-[#e4ecfb]">
            <div className="flex h-[12px] shrink-0 items-center justify-center bg-[#c8daf8] text-[#4a6ab0]">
              <svg className="h-[6px] w-[8px]" viewBox="0 0 8 6"><path d="M1 5 L4 1.5 L7 5" stroke="#3c5aa8" strokeWidth="1.5" fill="none" /></svg>
            </div>
            <div className="h-[117px] shrink-0" />
            <div className="h-[349px] shrink-0 bg-[#c7d8fb]" />
            <div className="flex-1 bg-[#f6f4e8]" />
            <div className="flex h-[11px] shrink-0 items-center justify-center bg-[#c8daf8]">
              <svg className="h-[6px] w-[8px]" viewBox="0 0 8 6"><path d="M1 1 L4 4.5 L7 1" stroke="#3c5aa8" strokeWidth="1.5" fill="none" /></svg>
            </div>
          </div>
        </div>
        {/* horizontal scrollbar */}
        <div className="flex h-[13px] shrink-0 items-stretch">
          <div className="flex w-[13px] shrink-0 items-center justify-center bg-[#c8daf8]">
            <svg className="h-[8px] w-[6px]" viewBox="0 0 6 8"><path d="M5 1 L1.5 4 L5 7" stroke="#3c5aa8" strokeWidth="1.5" fill="none" /></svg>
          </div>
          <div className="w-[297px] shrink-0 bg-[#f8f6ea]" />
          <div className="w-[443px] shrink-0 bg-[#c7d8fb]" />
          <div className="w-[120px] shrink-0 bg-[#f8f6ea]" />
          <div className="flex w-[12px] shrink-0 items-center justify-center bg-[#c8daf8]">
            <svg className="h-[8px] w-[6px]" viewBox="0 0 6 8"><path d="M1 1 L4.5 4 L1 7" stroke="#3c5aa8" strokeWidth="1.5" fill="none" /></svg>
          </div>
          <div className="flex-1 bg-[#ece9d8]" />
        </div>
      </div>

      {/* window bottom edge */}
      <div className="h-[2px] shrink-0 bg-white" />
      <div className="h-[2px] shrink-0 bg-[#0a2a8c]" />
      <div className="h-[2px] shrink-0 bg-white" />

      {/* taskbar */}
      <div className="flex h-[24px] shrink-0 items-center gap-[2px] bg-gradient-to-b from-[#2f7ae4] to-[#1f5fd0] pl-[3px]">
        <QuickIcons />
        <div className="w-[13px] shrink-0" />
        <Task c="w-[107px]" icon={<Folder />} label="cascade_control" />
        <Task c="w-[110px]" active icon={<Ico><rect width="12" height="12" fill="#e8c030" /><rect x="1.5" y="2" width="3" height="8" fill="#b02020" /><rect x="7.5" y="2" width="3" height="8" fill="#204080" /></Ico>} label="cascade_control_t..." />
        <Task c="w-[109px]" icon={<Ico><rect width="12" height="12" fill="#e86a20" /><rect x="3" y="2" width="2" height="8" fill="#fbe0c8" /><rect x="7" y="2" width="2" height="8" fill="#fbe0c8" /></Ico>} label="2 Microsoft Offic..." />
        <Task c="w-[109px]" icon={<Ico><circle cx="6" cy="6" r="5" fill="#f0f4ff" /><circle cx="6" cy="6" r="3" fill="#203060" /><circle cx="6" cy="6" r="1" fill="#fff" /></Ico>} label="Windows Media Pla..." />
        <Task c="w-[110px]" icon={<Ico><rect width="12" height="12" fill="#3c3cb8" /><rect x="2" y="2" width="8" height="8" fill="#c8c8f8" /><rect x="4" y="4" width="4" height="4" fill="#3c3cb8" /></Ico>} label="Flashing" />
        <div className="ml-[2px] flex h-[24px] flex-1 items-center gap-[3px] bg-[#1c96e6] pl-[2px]">
          <Ico><circle cx="6" cy="6" r="5.5" fill="#c0e0f8" /><path d="M7.5 3 L4.5 6 L7.5 9" stroke="#2060c0" strokeWidth="1.5" fill="none" /></Ico>
          <Ico><path d="M1 3 H11 L6 11 Z" fill="#20308c" /><path d="M4 4 H8 L6 7 Z" fill="#e0e8f8" /></Ico>
          <Ico><rect x="1" y="2" width="4" height="4" fill="#a0b0c0" /><rect x="6" y="6" width="5" height="5" fill="#c02030" /></Ico>
          <Ico><circle cx="6" cy="6" r="5" fill="#e8c830" /></Ico>
        </div>
      </div>
      <div className="flex-1 bg-black" />
    </div>
  );
}
